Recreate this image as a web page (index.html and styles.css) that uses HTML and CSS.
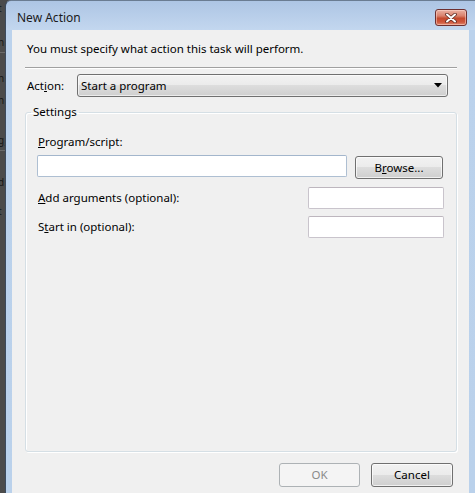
FILE: index.html
```html
<!DOCTYPE html>
<html>
<head>
<meta charset="utf-8">
<link rel="stylesheet" href="styles.css">
</head>
<body>

<div class="desk">
  <div class="frag f1">t</div>
  <div class="frag f2">n</div>
  <div class="rule-dark"></div>
  <div class="frag f3">n</div>
  <div class="frag f4">n</div>
  <div class="frag f5"><u>g</u></div>
  <div class="rule-dark"></div>
  <div class="frag f6">d</div>
  <div class="frag f7">t</div>
</div>

<div class="window">
  <div class="titlebar">
    <div class="title">New Action</div>
    <div class="close">
      <svg width="12" height="10" viewBox="0 0 12 10">
        <path d="M2 1.5 L10 8.5 M10 1.5 L2 8.5" stroke="#5b2a22" stroke-width="3.6" stroke-linecap="round"/>
        <path d="M2 1.5 L10 8.5 M10 1.5 L2 8.5" stroke="#ffffff" stroke-width="2" stroke-linecap="round"/>
      </svg>
    </div>
  </div>

  <div class="client">
    <div class="message">You must specify what action this task will perform.</div>
    <div class="rule"></div>

    <div class="action-row">
      <label class="action-label">Act<u>i</u>on:</label>
      <div class="select">
        <span>Start a program</span>
        <svg width="8" height="5" viewBox="0 0 8 5"><path d="M0 0 H8 L4 4.5 Z" fill="#000"/></svg>
      </div>
    </div>

    <fieldset class="group">
      <legend>Settings</legend>
      <div class="group-body">
        <div class="field-label"><u>P</u>rogram/script:</div>
        <div class="program-row">
          <div class="input input-program"></div>
          <button class="btn btn-browse">B<u>r</u>owse...</button>
        </div>
        <div class="arg-row">
          <span><u>A</u>dd arguments (optional):</span>
          <div class="input input-small"></div>
        </div>
        <div class="arg-row arg-row-start">
          <span>S<u>t</u>art in (optional):</span>
          <div class="input input-small"></div>
        </div>
      </div>
    </fieldset>

    <div class="buttons">
      <button class="btn btn-ok" disabled>OK</button>
      <button class="btn btn-cancel">Cancel</button>
    </div>
  </div>
</div>

</body>
</html>
```

FILE: styles.css
```css
*, *:before, *:after {
  box-sizing: border-box;
}

html, body {
  margin: 0;
  height: 100%;
  overflow: hidden;
}

body {
  display: flex;
  background: #4a4a4a;
  color: #000;
  font: 11.5px/16px "Noto Sans", "DejaVu Sans", sans-serif;
}

/* bits of the window behind */
.desk {
  width: 5px;
  flex: none;
  overflow: hidden;
  background: #4b4b4b;
  color: #161616;
  display: flex;
  flex-direction: column;
  align-items: flex-start;
  font-size: 10px;
}
.desk .frag {
  line-height: 14px;
  margin-left: -2px;
}
.desk .f1 { margin-top: 1px; }
.desk .f2 { margin-top: 20px; }
.desk .f3 { margin-top: 18px; }
.desk .f4 { margin-top: 8px; }
.desk .f5 { margin-top: 26px; }
.desk .f6 { margin-top: 24px; }
.desk .f7 { margin-top: 15px; }
.desk .rule-dark {
  width: 10px;
  height: 1px;
  margin-top: 3px;
  background: #6a6a6a;
}

.window {
  flex: 1;
  min-width: 0;
  display: flex;
  flex-direction: column;
  border-left: 1px solid #3c4b5e;
  border-top: 1px solid #6a7c92;
  border-radius: 6px 0 0 0;
  padding: 0 6px 0 6px;
  background: linear-gradient(to bottom, #adc5e4 0, #c3d7ef 29px, #bbd2ec 29px, #bad1eb 100%);
}

.titlebar {
  height: 29px;
  flex: none;
  display: flex;
  justify-content: space-between;
  align-items: flex-start;
  padding: 8px 2px 0 5px;
  font-size: 12px;
}
.title {
  margin-top: 1px;
  color: #1b1b1b;
}
.close {
  width: 32px;
  height: 17px;
  border: 1px solid #6e3030;
  border-radius: 3px;
  background: linear-gradient(to bottom, #eab1a3 0, #d9806b 40%, #c44a2e 55%, #cf563c 80%, #e08a70 100%);
  box-shadow: inset 0 0 0 1px rgba(255, 220, 210, 0.5);
  display: flex;
  align-items: center;
  justify-content: center;
}

.client {
  flex: 1;
  display: flex;
  flex-direction: column;
  background: #f0f0f0;
  padding: 11px 12px 6px 13px;
}

.message {
  padding-left: 2px;
}

.rule {
  margin-top: 10px;
  border-top: 1px solid #a0a0a0;
  border-bottom: 1px solid #fff;
}

.action-row {
  display: flex;
  align-items: center;
  height: 23px;
  margin-top: 5px;
  padding-left: 2px;
}
.action-label {
  width: 50px;
}
.select {
  width: 371px;
  height: 23px;
  display: flex;
  align-items: center;
  justify-content: space-between;
  padding: 0 5px 0 3px;
  border: 1px solid #707070;
  border-radius: 3px;
  background: linear-gradient(to bottom, #f2f2f2 0, #ebebeb 50%, #dddddd 50%, #cfcfcf 100%);
  box-shadow: inset 0 0 0 1px rgba(255, 255, 255, 0.6);
}

.group {
  flex: 1;
  min-width: 0;
  margin: 7px 0 0;
  padding: 0;
  border: 1px solid #d5dfe5;
  border-radius: 3px;
  box-shadow: inset 1px 1px 0 #fff, 1px 1px 0 #fff;
}
.group legend {
  margin-left: 5px;
  padding: 0 2px;
}
.group-body {
  padding: 14px 12px 0;
}

.program-row {
  display: flex;
  align-items: flex-start;
  gap: 8px;
  margin-top: 5px;
}

.input {
  height: 22px;
  background: #fff;
  border: 1px solid #c9c4cc;
  border-top-color: #bdb6be;
  border-radius: 2px;
}
.input-program {
  width: 310px;
  margin-left: -1px;
  border-color: #aebfd2;
  border-top-color: #a3b6cc;
}
.input-small {
  width: 136px;
}

.arg-row {
  display: flex;
  justify-content: space-between;
  align-items: center;
  margin-top: 8px;
}
.arg-row-start {
  margin-top: 7px;
}

.btn {
  height: 24px;
  padding: 0;
  font: inherit;
  color: #000;
  border: 1px solid #707070;
  border-radius: 3px;
  background: linear-gradient(to bottom, #f2f2f2 0, #ebebeb 50%, #dddddd 50%, #cfcfcf 100%);
  box-shadow: inset 0 0 0 1px rgba(255, 255, 255, 0.7);
}
.btn-browse {
  width: 88px;
  height: 23px;
  margin-top: 1px;
}

.buttons {
  display: flex;
  justify-content: flex-end;
  gap: 11px;
  margin-top: 11px;
  padding-right: 4px;
}
.btn-ok {
  width: 81px;
  color: #8a8a8a;
  border-color: #adb2b5;
  background: #f4f4f4;
  box-shadow: none;
}
.btn-cancel {
  width: 82px;
}
```
